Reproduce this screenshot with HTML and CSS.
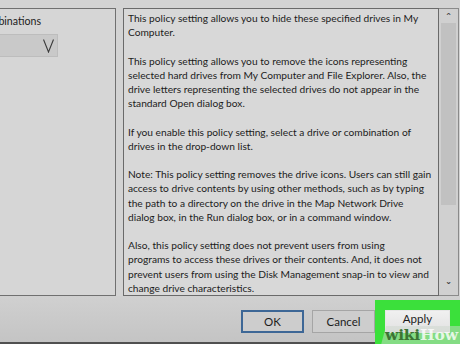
FILE: index.html
```html
<!DOCTYPE html>
<html lang="en">
<head>
    <meta charset="UTF-8">
    <title>Hide these specified drives in My Computer</title>
    <link rel="stylesheet" href="styles.css">
</head>
<body>
    <div class="main">
        <!-- Optionen (links, nur teilweise sichtbar) -->
        <div class="options">
            <div class="option-label"><span>Pick one of the following combinations</span></div>
            <div class="dropdown">
                <svg width="11" height="14" viewBox="0 0 11 14"><polyline points="0.5,0.5 5.5,13 10.5,0.5" fill="none" stroke="#3a3a3a" stroke-width="1.1"/></svg>
            </div>
        </div>

        <!-- Hilfetext -->
        <div class="help">
            <div class="help-text">
                <p>This policy setting allows you to hide these specified drives in My<br>Computer.</p>
                <p>This policy setting allows you to remove the icons representing<br>selected hard drives from My Computer and File Explorer. Also, the<br>drive letters representing the selected drives do not appear in the<br>standard Open dialog box.</p>
                <p>If you enable this policy setting, select a drive or combination of<br>drives in the drop-down list.</p>
                <p>Note: This policy setting removes the drive icons. Users can still gain<br>access to drive contents by using other methods, such as by typing<br>the path to a directory on the drive in the Map Network Drive<br>dialog box, in the Run dialog box, or in a command window.</p>
                <p>Also, this policy setting does not prevent users from using<br>programs to access these drives or their contents. And, it does not<br>prevent users from using the Disk Management snap-in to view and<br>change drive characteristics.</p>
            </div>
            <div class="scrollbar">
                <div class="arrow">&#710;</div>
                <div class="thumb"></div>
                <div class="arrow down">&#711;</div>
            </div>
        </div>
    </div>

    <div class="footer">
        <button class="btn btn-default">OK</button>
        <button class="btn">Cancel</button>
        <div class="highlight">
            <button class="btn btn-apply">Apply</button>
            <div class="watermark"><span class="wiki">wiki</span><span class="how">How</span></div>
        </div>
    </div>
</body>
</html>
```

FILE: styles.css
```css
body {
    margin: 0;
    width: 460px;
    height: 344px;
    overflow: hidden;
    background: #d3d3d3;
    font-family: "Lato", "Open Sans", sans-serif;
    font-size: 10.2px;
    color: #1c1c1c;
}

.main {
    display: flex;
    gap: 7px;
    padding-top: 8px;
    height: 288px;
}

/* Linkes Feld */
.options {
    width: 116px;
    border: 1px solid #707070;
    border-left: none;
    background: #d6d6d6;
    box-sizing: border-box;
}

.option-label {
    width: 41px;
    display: flex;
    justify-content: flex-end;
    white-space: nowrap;
    margin-top: 6px;
    height: 15px;
    font-size: 10.6px;
}

.dropdown {
    width: 58px;
    height: 23px;
    margin-top: 4px;
    background: #c9c9c9;
    border: 1px solid #bdbdbd;
    border-left: none;
    box-sizing: border-box;
    display: flex;
    justify-content: flex-end;
    align-items: center;
    padding-right: 3px;
}

/* Rechtes Feld */
.help {
    flex: 1;
    display: flex;
}

.help-text {
    width: 316px;
    box-sizing: border-box;
    border: 1px solid #6a6a6a;
    background: #d8d8d8;
    padding: 2px 0 0 4px;
    line-height: 14.2px;
    white-space: nowrap;
    overflow: hidden;
}

.help-text p {
    margin: 0 0 14.2px;
}

.scrollbar {
    width: 19px;
    border: 1px solid #8a8a8a;
    border-left: none;
    background: #d0d0d0;
    display: flex;
    flex-direction: column;
    align-items: center;
}

.arrow {
    height: 14px;
    font-size: 13px;
    line-height: 18px;
    color: #444;
}

.arrow.down {
    margin-top: auto;
    line-height: 12px;
}

.thumb {
    width: 15px;
    height: 182px;
    background: #c1c1c1;
}

/* Untere Leiste */
.footer {
    height: 48px;
    box-sizing: border-box;
    border-bottom: 2px solid #505050;
    background: linear-gradient(#d0d0d0, #c4c4c4);
    display: flex;
    justify-content: flex-end;
    align-items: flex-start;
    padding-top: 14px;
}

.btn {
    width: 63px;
    height: 23px;
    font-family: inherit;
    font-size: 11.5px;
    color: #1c1c1c;
    background: #cdcdcd;
    border: 1px solid #a5a5a5;
    padding: 0;
}

.btn-default {
    border: 2px solid #3d6796;
    margin-right: 8px;
}

.highlight {
    position: relative;
    width: 85px;
    height: 45px;
    margin-top: -10px;
    background: #3be03b;
    padding: 10px 0 0 10px;
    box-sizing: border-box;
}

.btn-apply {
    width: 65px;
    background: linear-gradient(#f0f0f0, #e2e2e2);
    border-color: #e6e6e6;
    padding-bottom: 6px;
}

/* wikiHow-Wasserzeichen */
.watermark {
    position: absolute;
    left: 6px;
    right: 0;
    bottom: 0;
    height: 19px;
    padding-left: 4px;
    background: rgba(205, 215, 205, 0.5);
    clip-path: polygon(5px 0, 100% 0, 100% 100%, 0 100%);
    font-family: "DejaVu Serif", serif;
    font-weight: bold;
    font-size: 15.5px;
    line-height: 17px;
    letter-spacing: -0.2px;
    white-space: nowrap;
}

.watermark .wiki {
    color: #3c7434;
}

.watermark .how {
    color: rgba(255, 255, 255, 0.8);
}
```
